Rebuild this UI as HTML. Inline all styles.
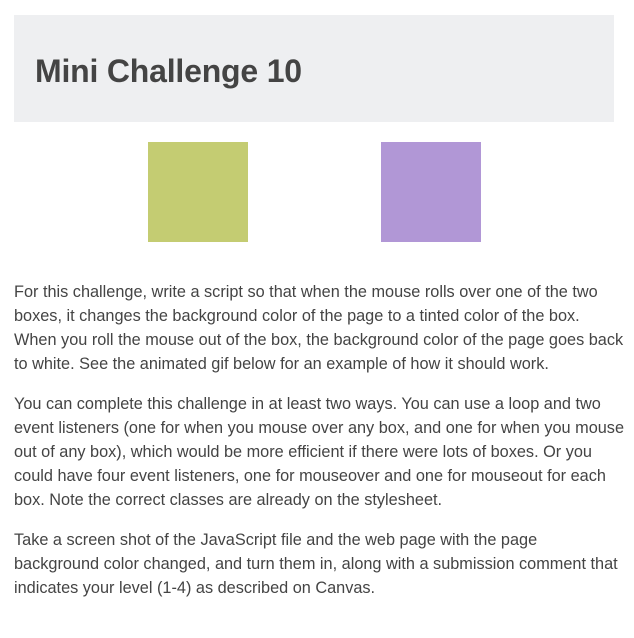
<!DOCTYPE html>
<html><head><style>
html,body{margin:0;padding:0;background:#fff;}
body{width:634px;height:638px;overflow:hidden;font-family:"Liberation Sans",Arial,sans-serif;color:#444;position:relative;}
.hdr{position:absolute;left:14px;top:15px;width:600px;height:107px;background:#eeeff1;}
.hdr h1{position:absolute;left:21px;top:40px;margin:0;font-size:32px;font-weight:bold;color:#444;line-height:1;letter-spacing:-0.2px;}
.b1{position:absolute;left:148px;top:142px;width:100px;height:100px;background:#c4cc72;}
.b2{position:absolute;left:381px;top:142px;width:100px;height:100px;background:#b197d6;}
.txt{position:absolute;left:14px;top:280px;width:620px;font-size:16.3px;line-height:24px;white-space:nowrap;}
.txt p{margin:0 0 16px 0;}
</style></head><body>
<div class="hdr"><h1>Mini Challenge 10</h1></div>
<div class="b1"></div><div class="b2"></div>
<div class="txt">
<p>For this challenge, write a script so that when the mouse rolls over one of the two<br>boxes, it changes the background color of the page to a tinted color of the box.<br>When you roll the mouse out of the box, the background color of the page goes back<br>to white. See the animated gif below for an example of how it should work.</p>
<p>You can complete this challenge in at least two ways. You can use a loop and two<br>event listeners (one for when you mouse over any box, and one for when you mouse<br>out of any box), which would be more efficient if there were lots of boxes. Or you<br>could have four event listeners, one for mouseover and one for mouseout for each<br>box. Note the correct classes are already on the stylesheet.</p>
<p>Take a screen shot of the JavaScript file and the web page with the page<br>background color changed, and turn them in, along with a submission comment that<br>indicates your level (1-4) as described on Canvas.</p>
</div>
</body></html>
